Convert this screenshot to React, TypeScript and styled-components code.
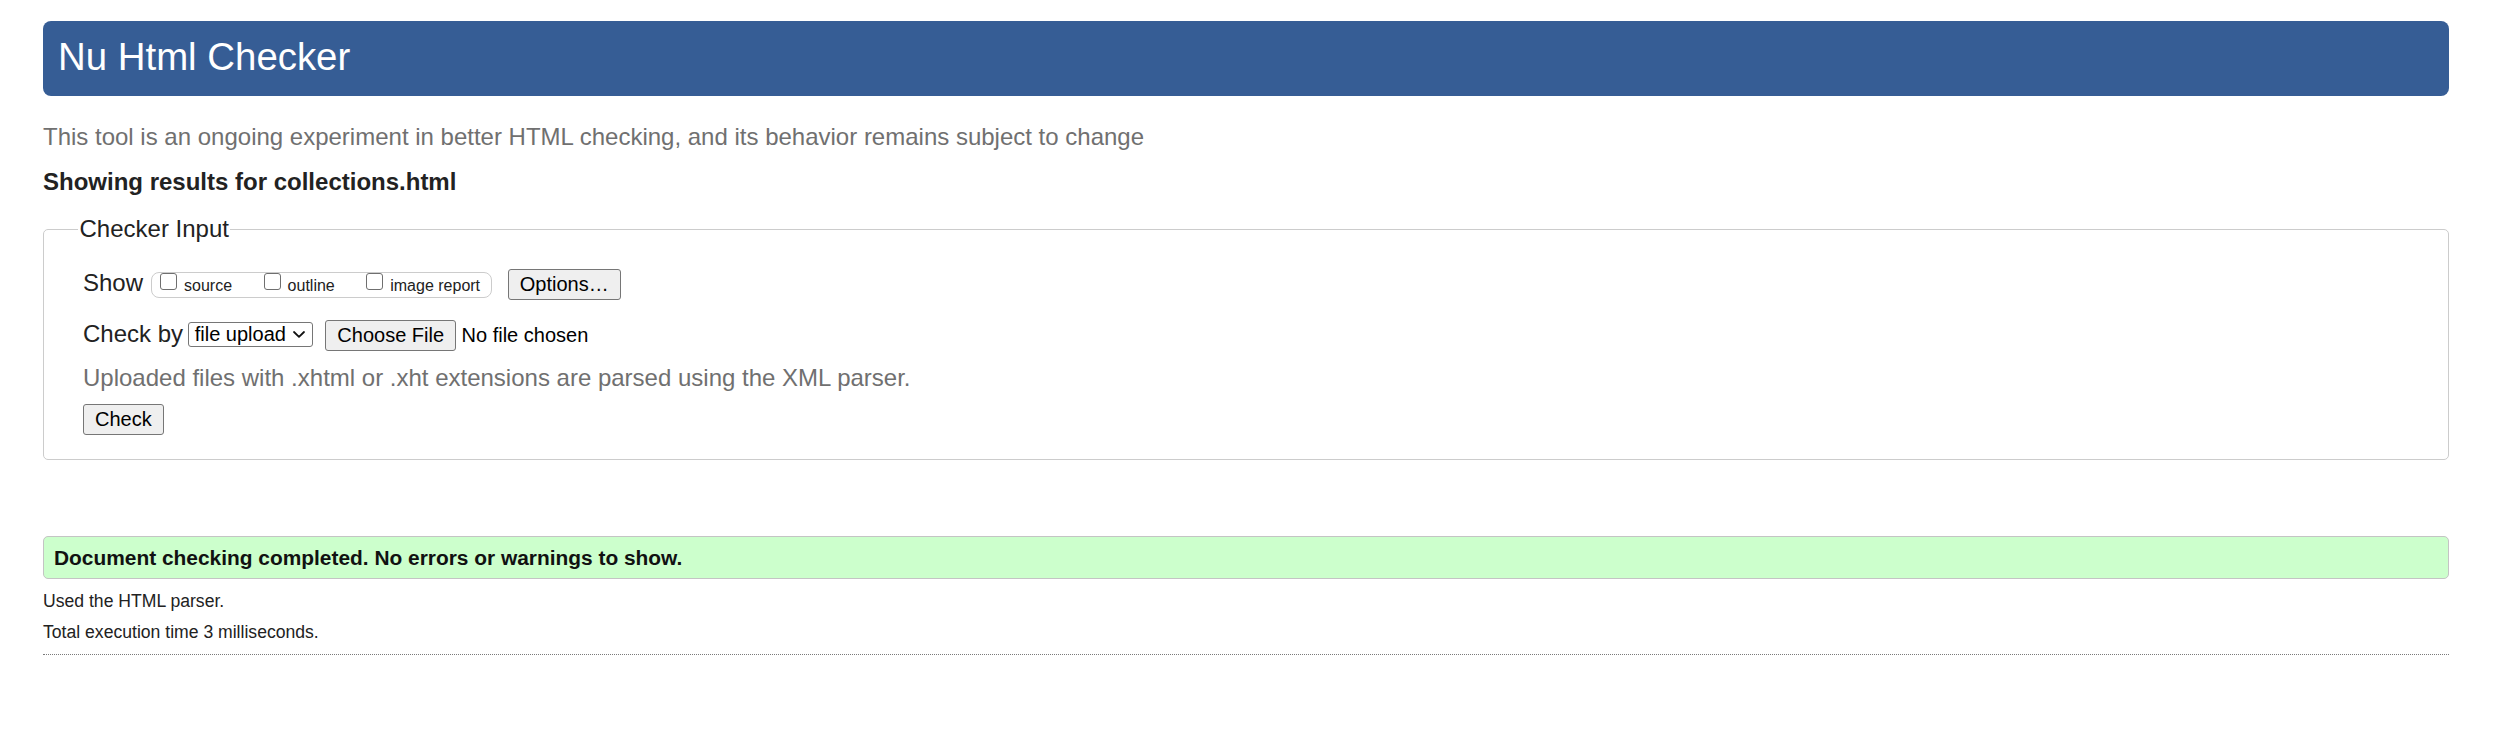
import React from "react";
import styled, { createGlobalStyle } from "styled-components";

const GlobalStyle = createGlobalStyle`
  html, body {
    margin: 0;
    padding: 0;
    background: #ffffff;
  }
  body {
    font-family: Arial, "Liberation Sans", Helvetica, sans-serif;
    color: #222222;
  }
  * {
    box-sizing: border-box;
  }
`;

const Page = styled.main`
  display: flex;
  flex-direction: column;
  padding: 21px 49px 60px 43px;
`;

const Banner = styled.h1`
  margin: 0;
  padding: 14px 15px 17px;
  background: #365d95;
  color: #ffffff;
  font-size: 38.4px;
  font-weight: normal;
  line-height: 44px;
  border-radius: 8px;
`;

const Note = styled.p<{ $top: number }>`
  margin: ${(p) => p.$top}px 0 0;
  font-size: 24px;
  line-height: 28px;
  color: #707070;
`;

const ResultsTitle = styled.h2`
  margin: 17px 0 0;
  font-size: 24px;
  line-height: 28px;
  font-weight: bold;
  color: #222222;
`;

const InputSet = styled.fieldset`
  margin: 19px 0 0;
  padding: 26px 0 24px 34px;
  border: 1px solid #cccccc;
  border-radius: 5px;
  min-width: 0;
`;

const Legend = styled.legend`
  padding: 0 1.5px;
  font-size: 24px;
  line-height: 28px;
  color: #222222;
`;

const Inner = styled.div`
  display: flex;
  flex-direction: column;
  align-items: flex-start;
  padding-left: 5px;
`;

const Row = styled.div<{ $top?: number }>`
  display: flex;
  align-items: flex-start;
  margin-top: ${(p) => p.$top ?? 0}px;
`;

const RowLabel = styled.span`
  font-size: 24px;
  line-height: 28px;
  color: #222222;
  white-space: nowrap;
`;

const CheckGroup = styled.div`
  display: flex;
  align-items: flex-start;
  height: 25.5px;
  margin: 3px 0 0 8px;
  padding: 0 11px 0 8px;
  border: 1px solid #cccccc;
  border-radius: 8px;
  gap: 31.5px;
`;

const Option = styled.label`
  display: flex;
  align-items: flex-start;
  gap: 7px;
  font-size: 16px;
  line-height: 18px;
  color: #222222;
  white-space: nowrap;
`;

const Box = styled.input`
  appearance: none;
  -webkit-appearance: none;
  width: 17px;
  height: 17.5px;
  margin: -0.5px 0 0;
  border: 1.5px solid #6f6f6f;
  border-radius: 3px;
  background: #ffffff;
`;

const OptionText = styled.span`
  margin-top: 3.5px;
`;

const Button = styled.button<{ $left?: number }>`
  height: 31px;
  margin-left: ${(p) => p.$left ?? 0}px;
  padding: 0 11px;
  border: 1px solid #767676;
  border-radius: 3px;
  background: #efefef;
  color: #000000;
  font-family: Arial, "Liberation Sans", Helvetica, sans-serif;
  font-size: 20px;
  line-height: 23px;
  white-space: nowrap;
`;

const FakeSelect = styled.div`
  display: flex;
  align-items: center;
  justify-content: space-between;
  width: 125.6px;
  height: 25px;
  margin: 2px 12px 0 4.7px;
  padding: 0 7px 0 6px;
  border: 1px solid #767676;
  border-radius: 3px;
  background: #ffffff;
  color: #000000;
  font-size: 20px;
  line-height: 23px;
  white-space: nowrap;
`;

const FileState = styled.span`
  margin: 4px 0 0 5.5px;
  font-size: 20px;
  line-height: 23px;
  color: #000000;
  white-space: nowrap;
`;

const Success = styled.div`
  margin-top: 76px;
  height: 43px;
  padding: 9px 10px 8px;
  border: 1px solid #c4c4c4;
  border-radius: 5px;
  background: #ccffcc;
  color: #111111;
  font-size: 20.9px;
  line-height: 24px;
  font-weight: bold;
  white-space: nowrap;
`;

const Detail = styled.p<{ $top: number }>`
  margin: ${(p) => p.$top}px 0 0;
  font-size: 17.6px;
  line-height: 20px;
  color: #222222;
`;

const Rule = styled.hr`
  margin: 12px 0 0;
  height: 0;
  border: none;
  border-top: 1px dotted #7a7a7a;
`;

const Chevron = () => (
  <svg width="12" height="7" viewBox="0 0 12 7" aria-hidden="true">
    <path d="M1 1 L6 5.8 L11 1" fill="none" stroke="#111" strokeWidth="1.8" strokeLinecap="round" strokeLinejoin="round" />
  </svg>
);

export default function App() {
  return (
    <>
      <GlobalStyle />
      <Page>
        <Banner>Nu Html Checker</Banner>
        <Note $top={27}>
          This tool is an ongoing experiment in better HTML checking, and its behavior remains subject to change
        </Note>
        <ResultsTitle>Showing results for collections.html</ResultsTitle>
        <InputSet>
          <Legend>Checker Input</Legend>
          <Inner>
            <Row>
              <RowLabel>Show</RowLabel>
              <CheckGroup>
                <Option>
                  <Box type="checkbox" />
                  <OptionText>source</OptionText>
                </Option>
                <Option>
                  <Box type="checkbox" />
                  <OptionText>outline</OptionText>
                </Option>
                <Option>
                  <Box type="checkbox" />
                  <OptionText>image report</OptionText>
                </Option>
              </CheckGroup>
              <Button type="button" $left={15.7}>Options…</Button>
            </Row>
            <Row $top={20}>
              <RowLabel>Check by</RowLabel>
              <FakeSelect>
                <span>file upload</span>
                <Chevron />
              </FakeSelect>
              <Button type="button">Choose File</Button>
              <FileState>No file chosen</FileState>
            </Row>
            <Note $top={12.5}>Uploaded files with .xhtml or .xht extensions are parsed using the XML parser.</Note>
            <Row $top={12.6}>
              <Button type="submit">Check</Button>
            </Row>
          </Inner>
        </InputSet>
        <Success>Document checking completed. No errors or warnings to show.</Success>
        <Detail $top={12}>Used the HTML parser.</Detail>
        <Detail $top={10.5}>Total execution time 3 milliseconds.</Detail>
        <Rule />
      </Page>
    </>
  );
}
